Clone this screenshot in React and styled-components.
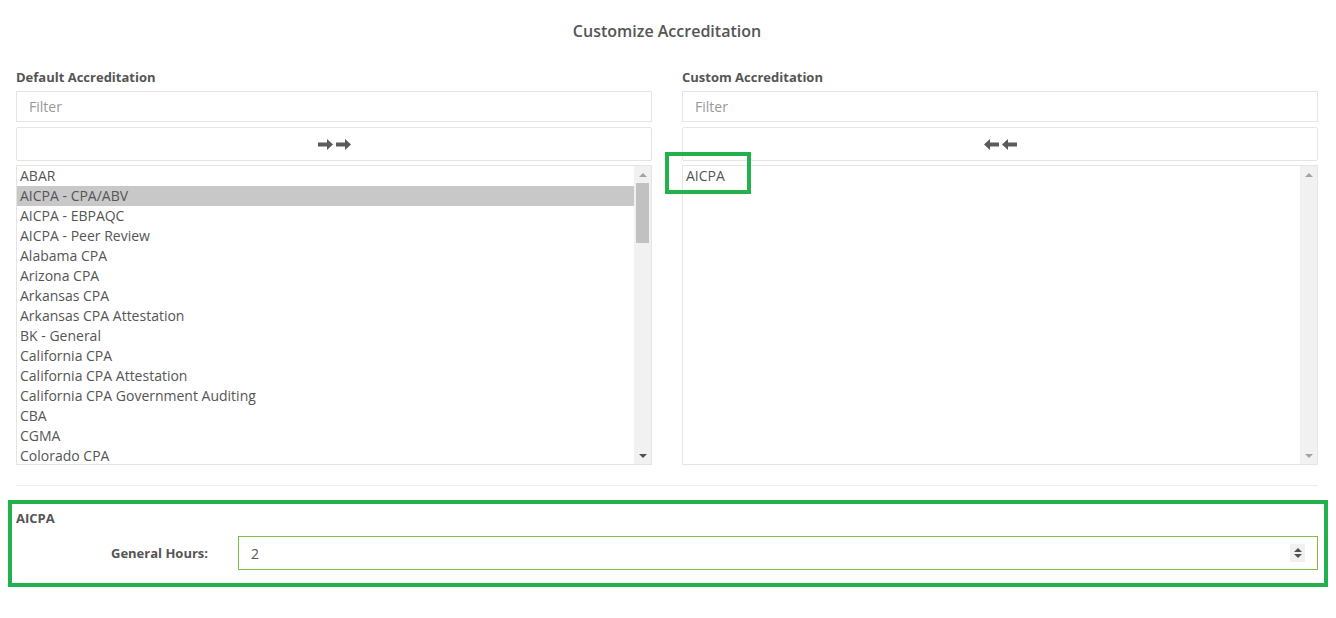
import React from 'react';
import styled, { createGlobalStyle } from 'styled-components';

const GlobalStyle = createGlobalStyle`
  html, body {
    margin: 0;
    padding: 0;
    background: #fff;
    font-family: "Open Sans", "Liberation Sans", sans-serif;
    color: #555;
  }
  * { box-sizing: border-box; }
`;

const Page = styled.div`
  padding: 20px 18px 0 16px;
  width: 1336px;
`;

const Title = styled.h4`
  margin: 0 0 26px;
  text-align: center;
  font-size: 16px;
  font-weight: 600;
  line-height: 22px;
  color: #555;
`;

const Columns = styled.div`
  display: grid;
  grid-template-columns: 1fr 1fr;
  column-gap: 30px;
`;

const Column = styled.div`
  position: relative;
  display: flex;
  flex-direction: column;
`;

const Label = styled.div`
  font-size: 13px;
  font-weight: 700;
  line-height: 18px;
  margin-bottom: 5px;
  color: #555;
`;

const Filter = styled.input`
  height: 31px;
  border: 1px solid #e5e5e5;
  padding: 0 12px;
  font-family: inherit;
  font-size: 14px;
  color: #555;
  outline: none;
  &::placeholder { color: #999; }
`;

const MoveButton = styled.button`
  margin-top: 5px;
  height: 34px;
  border: 1px solid #e5e5e5;
  border-radius: 2px;
  background: #fff;
  display: flex;
  align-items: center;
  justify-content: center;
  gap: 3px;
  padding: 0;
  cursor: pointer;
`;

const ListBox = styled.div`
  margin-top: 4px;
  height: 300px;
  border: 1px solid #e5e5e5;
  display: flex;
  overflow: hidden;
`;

const Items = styled.div`
  flex: 1;
  overflow: hidden;
`;

const Item = styled.div`
  height: 20px;
  line-height: 20px;
  padding-left: 3px;
  font-size: 14px;
  color: #555;
  white-space: nowrap;
  background: ${({ $selected }) => ($selected ? '#c8c8c8' : 'transparent')};
`;

const Scrollbar = styled.div`
  width: 17px;
  background: #f1f1f1;
  display: flex;
  flex-direction: column;
  align-items: center;
`;

const ScrollArrow = styled.div`
  height: 17px;
  width: 17px;
  display: flex;
  align-items: center;
  justify-content: center;
  &::after {
    content: '';
    border-left: 4px solid transparent;
    border-right: 4px solid transparent;
    ${({ $down, $active }) =>
      $down
        ? `border-top: 4px solid ${$active ? '#505050' : '#a3a3a3'};`
        : `border-bottom: 4px solid ${$active ? '#505050' : '#a3a3a3'};`}
  }
`;

const Track = styled.div`
  flex: 1;
  width: 100%;
  padding: 0 2px;
`;

const Thumb = styled.div`
  height: 60px;
  background: #c1c1c1;
`;

const Highlight = styled.div`
  position: absolute;
  left: -17px;
  top: 84px;
  width: 86px;
  height: 42px;
  border: 4px solid #22b14c;
  pointer-events: none;
`;

const Divider = styled.hr`
  margin: 20px 0 14px;
  border: 0;
  border-top: 1px solid #eee;
`;

const Details = styled.section`
  margin: 0 -10px 0 -8px;
  border: 4px solid #22b14c;
  padding: 5px 6px 13px 4px;
`;

const DetailsTitle = styled.div`
  font-size: 13px;
  font-weight: 700;
  line-height: 18px;
  color: #555;
`;

const FieldRow = styled.div`
  margin-top: 9px;
  display: grid;
  grid-template-columns: 192px 1fr;
  column-gap: 30px;
  align-items: center;
`;

const FieldLabel = styled.label`
  text-align: right;
  font-size: 13px;
  font-weight: 700;
  color: #555;
`;

const NumberBox = styled.div`
  height: 34px;
  border: 1px solid #7cc142;
  display: flex;
  align-items: center;
  padding: 0 12px;
`;

const NumberValue = styled.div`
  flex: 1;
  font-size: 14px;
  color: #555;
`;

const Spinner = styled.div`
  width: 15px;
  height: 18px;
  background: #f0f0f0;
  display: flex;
  flex-direction: column;
  align-items: center;
  justify-content: center;
  gap: 2px;
`;

const SpinArrow = styled.div`
  border-left: 4px solid transparent;
  border-right: 4px solid transparent;
  ${({ $down }) => ($down ? 'border-top: 4px solid #505050;' : 'border-bottom: 4px solid #505050;')}
`;

function Arrow({ left }) {
  return (
    <svg width="15" height="11" viewBox="0 0 15 11">
      <path
        d={left ? 'M0 5.5 L6 0 L6 3.5 L15 3.5 L15 7.5 L6 7.5 L6 11 Z' : 'M15 5.5 L9 0 L9 3.5 L0 3.5 L0 7.5 L9 7.5 L9 11 Z'}
        fill="#5b5b5b"
      />
    </svg>
  );
}

const defaults = [
  'ABAR',
  'AICPA - CPA/ABV',
  'AICPA - EBPAQC',
  'AICPA - Peer Review',
  'Alabama CPA',
  'Arizona CPA',
  'Arkansas CPA',
  'Arkansas CPA Attestation',
  'BK - General',
  'California CPA',
  'California CPA Attestation',
  'California CPA Government Auditing',
  'CBA',
  'CGMA',
  'Colorado CPA',
];

export default function App() {
  return (
    <Page>
      <GlobalStyle />
      <Title>Customize Accreditation</Title>
      <Columns>
        <Column>
          <Label>Default Accreditation</Label>
          <Filter placeholder="Filter" />
          <MoveButton>
            <Arrow />
            <Arrow />
          </MoveButton>
          <ListBox>
            <Items>
              {defaults.map((name) => (
                <Item key={name} $selected={name === 'AICPA - CPA/ABV'}>{name}</Item>
              ))}
            </Items>
            <Scrollbar>
              <ScrollArrow />
              <Track>
                <Thumb />
              </Track>
              <ScrollArrow $down $active />
            </Scrollbar>
          </ListBox>
        </Column>
        <Column>
          <Label>Custom Accreditation</Label>
          <Filter placeholder="Filter" />
          <MoveButton>
            <Arrow left />
            <Arrow left />
          </MoveButton>
          <ListBox>
            <Items>
              <Item>AICPA</Item>
            </Items>
            <Scrollbar>
              <ScrollArrow />
              <Track />
              <ScrollArrow $down />
            </Scrollbar>
          </ListBox>
          <Highlight />
        </Column>
      </Columns>
      <Divider />
      <Details>
        <DetailsTitle>AICPA</DetailsTitle>
        <FieldRow>
          <FieldLabel>General Hours:</FieldLabel>
          <NumberBox>
            <NumberValue>2</NumberValue>
            <Spinner>
              <SpinArrow />
              <SpinArrow $down />
            </Spinner>
          </NumberBox>
        </FieldRow>
      </Details>
    </Page>
  );
}
